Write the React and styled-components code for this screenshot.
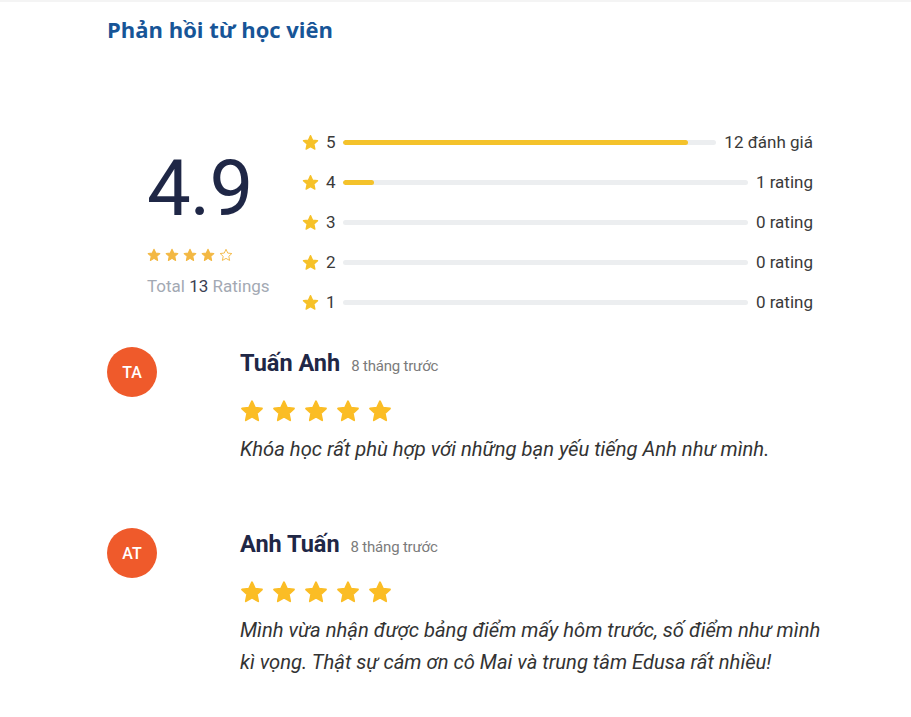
import React from "react";
import styled, { createGlobalStyle } from "styled-components";

const Global = createGlobalStyle`
  html, body { margin: 0; padding: 0; background: #fff; }
  body { font-family: Roboto, "Noto Sans", Arial, sans-serif; }
`;

const Page = styled.div`
  border-top: 2px solid #f4f4f4;
  padding: 0 60px 40px 107px;
`;

const Title = styled.h2`
  margin: 13px 0 0;
  font-family: "Open Sans", "Noto Sans", sans-serif;
  font-weight: 700;
  font-size: 22px;
  line-height: 28px;
  color: #175597;
`;

const Summary = styled.section`
  display: flex;
  align-items: center;
  margin: 79px 38px 0 0;
  padding-left: 40px;
`;

const Score = styled.div`
  width: 155px;
  display: flex;
  flex-direction: column;
`;

const Big = styled.div`
  font-size: 78px;
  line-height: 80px;
  font-weight: 400;
  color: #1f2746;
  letter-spacing: -1px;
`;

const StarRow = styled.div`
  display: flex;
  gap: ${(p) => p.$gap}px;
  margin-top: ${(p) => p.$mt || 0}px;
`;

const Total = styled.div`
  margin-top: 14px;
  font-size: 17px;
  color: #a3a9b3;
  b { font-weight: 400; color: #3b4152; }
`;

const Rows = styled.div`
  flex: 1;
  display: flex;
  flex-direction: column;
`;

const Row = styled.div`
  height: 40px;
  display: flex;
  align-items: center;
  gap: 7px;
  font-size: 17px;
  color: #3a3a3a;
`;

const Num = styled.span`
  width: 9px;
`;

const Track = styled.div`
  flex: 1;
  height: 5px;
  border-radius: 3px;
  background: #eceef0;
  margin: 0 1px;
  overflow: hidden;
`;

const Fill = styled.div`
  height: 100%;
  border-radius: 3px;
  background: #f4c22b;
`;

const Label = styled.span`
  white-space: nowrap;
`;

const Reviews = styled.div`
  display: flex;
  flex-direction: column;
  gap: 63px;
  margin-top: 25px;
`;

const Review = styled.article`
  display: flex;
  align-items: flex-start;
`;

const Avatar = styled.div`
  width: 50px;
  height: 50px;
  flex: none;
  border-radius: 50%;
  background: #ef5a2b;
  color: #fff;
  display: flex;
  align-items: center;
  justify-content: center;
  font-size: 16px;
  font-weight: 500;
`;

const Body = styled.div`
  flex: 1;
  margin-left: 83px;
  padding-top: 1px;
`;

const Head = styled.div`
  display: flex;
  align-items: baseline;
  gap: 11px;
  height: 30px;
  line-height: 30px;
`;

const Name = styled.span`
  font-size: 23.5px;
  font-weight: 700;
  color: #1f2746;
`;

const When = styled.span`
  font-size: 15px;
  color: #7b7b7b;
  letter-spacing: -0.2px;
`;

const Comment = styled.p`
  margin: 10px 0 0;
  font-size: 20.2px;
  line-height: 32px;
  font-style: italic;
  color: #333;
  max-width: 595px;
`;

const Star = ({ size, color, outline }) => (
  <svg width={size} height={size} viewBox="0 0 24 24" style={{ display: "block" }}>
    <polygon
      points="12,2.2 15,8.7 22,9.5 16.8,14.3 18.2,21.3 12,17.8 5.8,21.3 7.2,14.3 2,9.5 9,8.7"
      fill={outline ? "none" : color}
      stroke={color}
      strokeWidth={outline ? 1.6 : 1.8}
      strokeLinejoin="round"
    />
  </svg>
);

const bars = [
  { n: 5, pct: 92.3, label: "12 đánh giá" },
  { n: 4, pct: 7.7, label: "1 rating" },
  { n: 3, pct: 0, label: "0 rating" },
  { n: 2, pct: 0, label: "0 rating" },
  { n: 1, pct: 0, label: "0 rating" },
];

const reviews = [
  {
    initials: "TA",
    name: "Tuấn Anh",
    text: "Khóa học rất phù hợp với những bạn yếu tiếng Anh như mình.",
  },
  {
    initials: "AT",
    name: "Anh Tuấn",
    text: "Mình vừa nhận được bảng điểm mấy hôm trước, số điểm như mình kì vọng. Thật sự cám ơn cô Mai và trung tâm Edusa rất nhiều!",
  },
];

export default function App() {
  return (
    <Page>
      <Global />
      <Title>Phản hồi từ học viên</Title>
      <Summary>
        <Score>
          <Big>4.9</Big>
          <StarRow $gap={4} $mt={19}>
            {[0, 1, 2, 3].map((i) => (
              <Star key={i} size={14} color="#f3b843" />
            ))}
            <Star size={14} color="#f3b843" outline />
          </StarRow>
          <Total>
            Total <b>13</b> Ratings
          </Total>
        </Score>
        <Rows>
          {bars.map((b) => (
            <Row key={b.n}>
              <Star size={17} color="#f6c128" />
              <Num>{b.n}</Num>
              <Track>
                <Fill style={{ width: `${b.pct}%` }} />
              </Track>
              <Label>{b.label}</Label>
            </Row>
          ))}
        </Rows>
      </Summary>
      <Reviews>
        {reviews.map((r) => (
          <Review key={r.name}>
            <Avatar>{r.initials}</Avatar>
            <Body>
              <Head>
                <Name>{r.name}</Name>
                <When>8 tháng trước</When>
              </Head>
              <StarRow $gap={8} $mt={21}>
                {[0, 1, 2, 3, 4].map((i) => (
                  <Star key={i} size={24} color="#fbbd25" />
                ))}
              </StarRow>
              <Comment>{r.text}</Comment>
            </Body>
          </Review>
        ))}
      </Reviews>
    </Page>
  );
}
